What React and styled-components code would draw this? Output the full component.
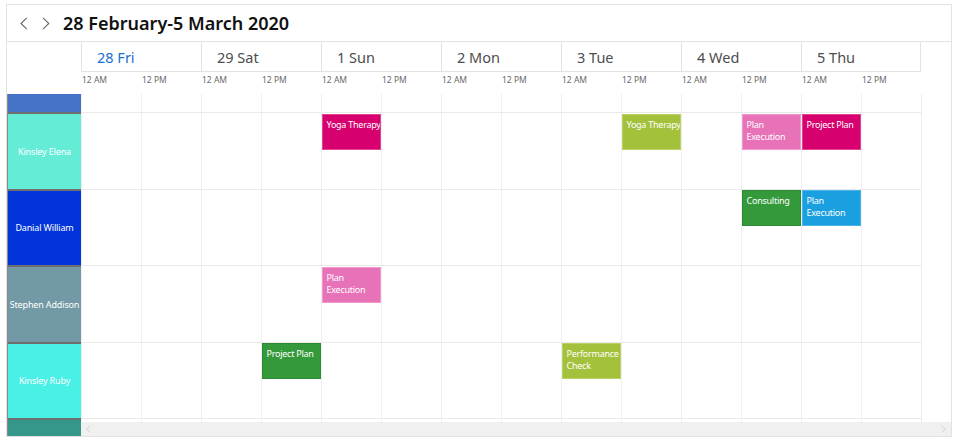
import React from "react";
import styled, { createGlobalStyle } from "styled-components";

const Global = createGlobalStyle`
  html, body { margin: 0; padding: 0; background: #fff; }
  body { font-family: "Noto Sans", "Open Sans", sans-serif; }
  * { box-sizing: border-box; }
`;

const Frame = styled.div`
  margin: 4px 0 0 6px;
  width: 946px;
  height: 433px;
  border: 1px solid #e3e3e3;
  display: flex;
  flex-direction: column;
  overflow: hidden;
`;

const Toolbar = styled.div`
  height: 37px;
  flex: none;
  border-bottom: 1px solid #e3e3e3;
  display: flex;
  align-items: center;
  padding-left: 6px;
`;

const NavButton = styled.button`
  border: none;
  background: transparent;
  padding: 0;
  width: 22px;
  height: 22px;
  display: flex;
  align-items: center;
  justify-content: center;
  cursor: pointer;
`;

const Title = styled.div`
  margin-left: 6px;
  font-size: 18px;
  font-weight: 600;
  color: #111;
`;

const Main = styled.div`
  flex: 1;
  display: flex;
  min-height: 0;
`;

const LeftColumn = styled.div`
  width: 74px;
  flex: none;
  display: flex;
  flex-direction: column;
`;

const Corner = styled.div`
  height: 52px;
  flex: none;
`;

const ResourceList = styled.div`
  flex: 1;
  display: flex;
  flex-direction: column;
  border-left: 1px solid #8a8a8a;
  overflow: hidden;
`;

const ResourceCell = styled.div`
  height: ${(p) => p.$h}px;
  flex: none;
  background: ${(p) => p.$color};
  border-top: ${(p) => (p.$first ? "none" : "2px solid #6e6e6e")};
  color: #fff;
  font-size: 9px;
  letter-spacing: -0.15px;
  display: flex;
  align-items: center;
  justify-content: center;
  white-space: nowrap;
`;

const RightColumn = styled.div`
  flex: 1;
  display: flex;
  flex-direction: column;
  min-width: 0;
`;

const DateRow = styled.div`
  height: 30px;
  flex: none;
  width: 840px;
  display: flex;
  border-bottom: 1px solid #e3e3e3;
`;

const DateCell = styled.div`
  width: 120px;
  flex: none;
  border-left: 1px solid #e3e3e3;
  border-right: ${(p) => (p.$last ? "1px solid #e3e3e3" : "none")};
  padding-left: 15px;
  display: flex;
  align-items: center;
  font-size: 14.5px;
  color: ${(p) => (p.$today ? "#1a6fd4" : "#4d4d4d")};
`;

const TimeRow = styled.div`
  height: 22px;
  flex: none;
  display: flex;
`;

const TimeLabel = styled.div`
  width: 60px;
  flex: none;
  font-size: 8.5px;
  color: #6a6a6a;
  padding: 2px 0 0 1px;
  white-space: nowrap;
`;

const GridArea = styled.div`
  flex: 1;
  min-height: 0;
  overflow: hidden;
  display: flex;
  flex-direction: column;
  width: 841px;
  border-right: 1px solid #ececec;
`;

const GridRow = styled.div`
  position: relative;
  height: ${(p) => p.$h}px;
  flex: none;
  display: flex;
  border-top: ${(p) => (p.$first ? "none" : "1px solid #eaeaea")};
`;

const Slot = styled.div`
  width: 60px;
  flex: none;
  border-left: 1px solid #efefef;
`;

const Appointment = styled.div`
  position: absolute;
  top: 0.5px;
  height: 36px;
  width: 59px;
  background: ${(p) => p.$color};
  border: 1px solid ${(p) => p.$edge};
  padding: 4px 0 0 3.5px;
  overflow: hidden;
`;

const AppointmentText = styled.div`
  width: 58px;
  color: #fff;
  font-size: 9px;
  letter-spacing: -0.25px;
  line-height: 12px;
`;

const Scrollbar = styled.div`
  height: 14px;
  flex: none;
  background: #f0f0f0;
  display: flex;
  align-items: center;
  justify-content: space-between;
  padding: 0 5px;
`;

const Chevron = ({ dir, size = 13, color = "#666", w = 1.1 }) => (
  <svg width={size * 0.6} height={size} viewBox="0 0 8 13">
    <path
      d={dir === "left" ? "M7 0.8 L1 6.5 L7 12.2" : "M1 0.8 L7 6.5 L1 12.2"}
      fill="none"
      stroke={color}
      strokeWidth={w}
    />
  </svg>
);

const days = [
  { label: "28 Fri", today: true },
  { label: "29 Sat" },
  { label: "1 Sun" },
  { label: "2 Mon" },
  { label: "3 Tue" },
  { label: "4 Wed" },
  { label: "5 Thu" },
];

const colors = {
  magenta: ["#d6006f", "#e0478f"],
  lime: ["#a3c13a", "#b9d266"],
  pink: ["#e772b8", "#f09acb"],
  green: ["#33993a", "#2d8a33"],
  blue: ["#1aa0e0", "#4bb4e8"],
};

const resources = [
  { name: "", color: "#4673c8", h: 18 },
  {
    name: "Kinsley Elena",
    color: "#65ecd7",
    h: 76.5,
    events: [
      { title: "Yoga Therapy", slot: 4, c: "magenta" },
      { title: "Yoga Therapy", slot: 9, c: "lime" },
      { title: "Plan Execution", slot: 11, c: "pink" },
      { title: "Project Plan", slot: 12, c: "magenta" },
    ],
  },
  {
    name: "Danial William",
    color: "#0134db",
    h: 76.5,
    events: [
      { title: "Consulting", slot: 11, c: "green" },
      { title: "Plan Execution", slot: 12, c: "blue" },
    ],
  },
  {
    name: "Stephen Addison",
    color: "#7399a6",
    h: 76.5,
    events: [{ title: "Plan Execution", slot: 4, c: "pink" }],
  },
  {
    name: "Kinsley Ruby",
    color: "#48f0e6",
    h: 76.5,
    events: [
      { title: "Project Plan", slot: 3, c: "green" },
      { title: "Performance Check", slot: 8, c: "lime" },
    ],
  },
  { name: "", color: "#35978a", h: 20 },
];

const slots = Array.from({ length: 14 }, (_, i) => i);

export default function App() {
  return (
    <>
      <Global />
      <Frame>
        <Toolbar>
          <NavButton aria-label="previous">
            <Chevron dir="left" />
          </NavButton>
          <NavButton aria-label="next">
            <Chevron dir="right" />
          </NavButton>
          <Title>28 February-5 March 2020</Title>
        </Toolbar>
        <Main>
          <LeftColumn>
            <Corner />
            <ResourceList>
              {resources.map((r, i) => (
                <ResourceCell key={i} $h={r.h} $color={r.color} $first={i === 0}>
                  {r.name}
                </ResourceCell>
              ))}
            </ResourceList>
          </LeftColumn>
          <RightColumn>
            <DateRow>
              {days.map((d, i) => (
                <DateCell key={d.label} $today={d.today} $last={i === days.length - 1}>
                  {d.label}
                </DateCell>
              ))}
            </DateRow>
            <TimeRow>
              {slots.map((s) => (
                <TimeLabel key={s}>{s % 2 === 0 ? "12 AM" : "12 PM"}</TimeLabel>
              ))}
            </TimeRow>
            <GridArea>
              {resources.map((r, i) => (
                <GridRow key={i} $h={r.h} $first={i === 0}>
                  {slots.map((s) => (
                    <Slot key={s} />
                  ))}
                  {(r.events || []).map((e, j) => (
                    <Appointment
                      key={j}
                      $color={colors[e.c][0]}
                      $edge={colors[e.c][1]}
                      style={{ left: e.slot * 60 + 1 }}
                    >
                      <AppointmentText>{e.title}</AppointmentText>
                    </Appointment>
                  ))}
                </GridRow>
              ))}
            </GridArea>
            <Scrollbar>
              <Chevron dir="left" size={8} color="#c4c4c4" w={1.2} />
              <Chevron dir="right" size={8} color="#c4c4c4" w={1.2} />
            </Scrollbar>
          </RightColumn>
        </Main>
      </Frame>
    </>
  );
}
